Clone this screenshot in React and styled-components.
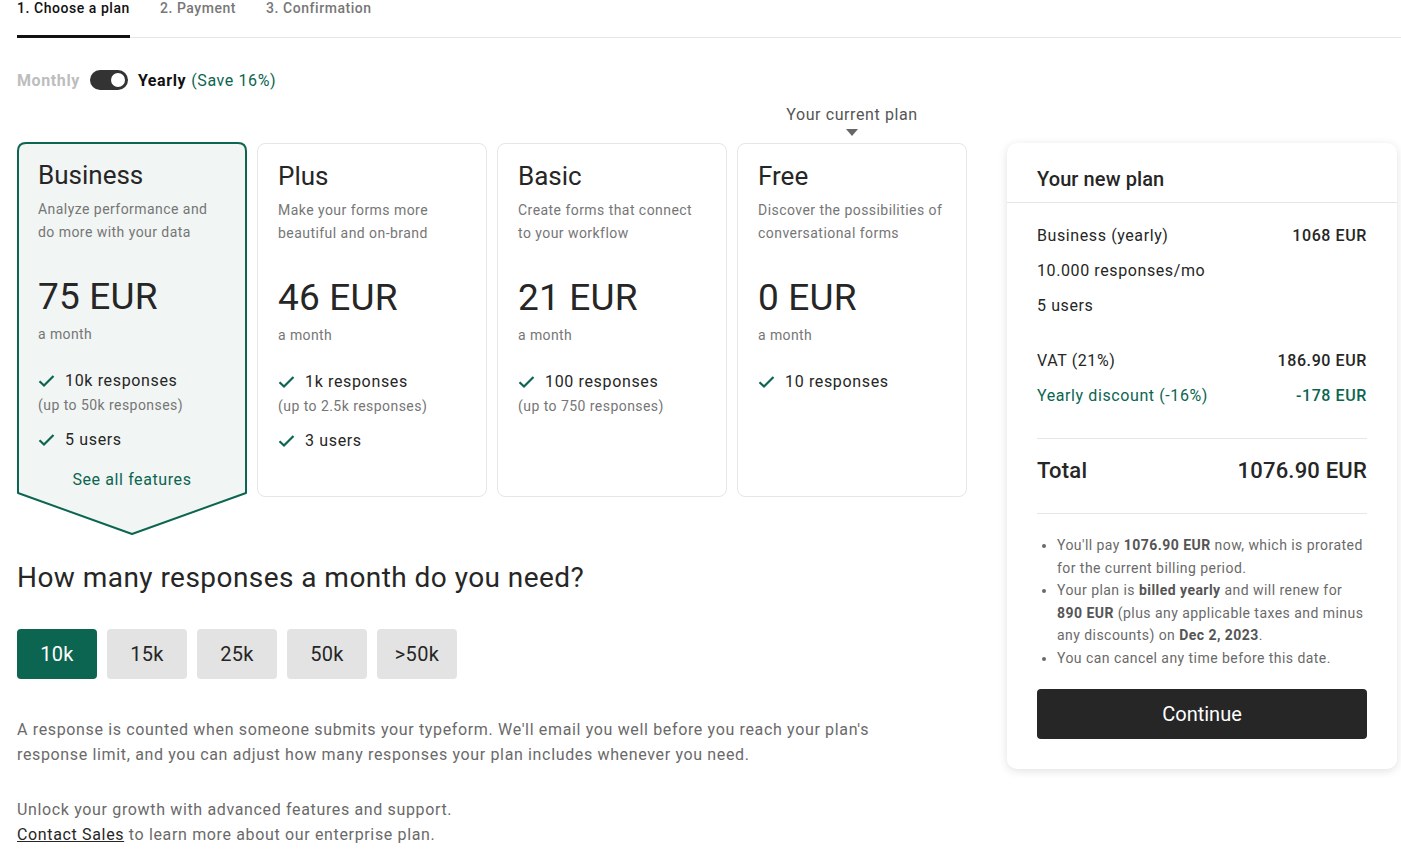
import styled, { createGlobalStyle } from "styled-components";

const GREEN = "#0b6550";

const GlobalStyle = createGlobalStyle`
  body {
    margin: 0;
    background: #fff;
    font-family: Roboto, "Liberation Sans", sans-serif;
    color: #262626;
  }
  * { box-sizing: border-box; }
`;

const plans = [
  {
    name: "Business",
    desc: ["Analyze performance and", "do more with your data"],
    price: "75 EUR",
    features: [
      { text: "10k responses", sub: "(up to 50k responses)" },
      { text: "5 users" },
    ],
    selected: true,
  },
  {
    name: "Plus",
    desc: ["Make your forms more", "beautiful and on-brand"],
    price: "46 EUR",
    features: [
      { text: "1k responses", sub: "(up to 2.5k responses)" },
      { text: "3 users" },
    ],
  },
  {
    name: "Basic",
    desc: ["Create forms that connect", "to your workflow"],
    price: "21 EUR",
    features: [{ text: "100 responses", sub: "(up to 750 responses)" }],
  },
  {
    name: "Free",
    desc: ["Discover the possibilities of", "conversational forms"],
    price: "0 EUR",
    features: [{ text: "10 responses" }],
    current: true,
  },
];

const amounts = ["10k", "15k", "25k", "50k", ">50k"];

const Check = () => (
  <svg width="17" height="14" viewBox="0 0 17 14">
    <path d="M1.5 7.2 L6 11.5 L15.5 2" fill="none" stroke={GREEN} strokeWidth="2.2" />
  </svg>
);

const SelectedShape = () => (
  <ShapeSvg viewBox="0 0 230 393" preserveAspectRatio="none">
    <path
      d="M9 1 H221 Q229 1 229 9 V351 L115 392 L1 351 V9 Q1 1 9 1 Z"
      fill="#f1f5f4"
      stroke={GREEN}
      strokeWidth="2"
      strokeLinejoin="round"
    />
  </ShapeSvg>
);

const PlanCard = ({ plan }) => (
  <Card $selected={plan.selected}>
    {plan.selected && <SelectedShape />}
    {plan.current && (
      <CurrentLabel>
        Your current plan
        <Triangle />
      </CurrentLabel>
    )}
    <CardBody>
      <PlanName>{plan.name}</PlanName>
      <PlanDesc>
        {plan.desc[0]}
        <br />
        {plan.desc[1]}
      </PlanDesc>
      <Price>{plan.price}</Price>
      <Per>a month</Per>
      <Features>
        {plan.features.map((f) => (
          <Feature key={f.text}>
            <FeatureLine>
              <Check />
              {f.text}
            </FeatureLine>
            {f.sub && <FeatureSub>{f.sub}</FeatureSub>}
          </Feature>
        ))}
      </Features>
      {plan.selected && <SeeAll>See all features</SeeAll>}
    </CardBody>
  </Card>
);

const App = () => {
  return (
    <Page>
      <GlobalStyle />
      <Tabs>
        <Tab $active>1. Choose a plan</Tab>
        <Tab>2. Payment</Tab>
        <Tab>3. Confirmation</Tab>
      </Tabs>
      <ToggleRow>
        <Monthly>Monthly</Monthly>
        <Switch>
          <Knob />
        </Switch>
        <Yearly>Yearly</Yearly>
        <Save>(Save 16%)</Save>
      </ToggleRow>
      <Main>
        <LeftColumn>
          <Cards>
            {plans.map((p) => (
              <PlanCard key={p.name} plan={p} />
            ))}
          </Cards>
          <Question>How many responses a month do you need?</Question>
          <Amounts>
            {amounts.map((a, i) => (
              <Amount key={a} $active={i === 0}>
                {a}
              </Amount>
            ))}
          </Amounts>
          <Note>
            A response is counted when someone submits your typeform. We'll email you well before
            you reach your plan's response limit, and you can adjust how many responses your plan
            includes whenever you need.
          </Note>
          <Note $gap={30}>
            Unlock your growth with advanced features and support.
            <br />
            <SalesLink href="#">Contact Sales</SalesLink> to learn more about our enterprise plan.
          </Note>
        </LeftColumn>
        <Summary>
          <SummaryHeader>Your new plan</SummaryHeader>
          <SummaryBody>
            <Line>
              <span>Business (yearly)</span>
              <Value>1068 EUR</Value>
            </Line>
            <Line>
              <span>10.000 responses/mo</span>
            </Line>
            <Line>
              <span>5 users</span>
            </Line>
            <Line $top={20}>
              <span>VAT (21%)</span>
              <Value>186.90 EUR</Value>
            </Line>
            <Line $green>
              <span>Yearly discount (-16%)</span>
              <Value>-178 EUR</Value>
            </Line>
            <Divider $top={25} />
            <TotalLine>
              <span>Total</span>
              <span>1076.90 EUR</span>
            </TotalLine>
            <Divider $top={27} />
            <Bullets>
              <li>
                You'll pay <b>1076.90 EUR</b> now, which is prorated for the current billing
                period.
              </li>
              <li>
                Your plan is <b>billed yearly</b> and will renew for <b>890 EUR</b> (plus any
                applicable taxes and minus any discounts) on <b>Dec 2, 2023</b>.
              </li>
              <li>You can cancel any time before this date.</li>
            </Bullets>
            <ContinueButton>Continue</ContinueButton>
          </SummaryBody>
        </Summary>
      </Main>
    </Page>
  );
};

export default App;

const Page = styled.div`
  padding: 0 4px 0 17px;
  height: 858px;
  overflow: hidden;
`;

const Tabs = styled.nav`
  display: flex;
  gap: 30px;
  border-bottom: 1px solid #e6e6e6;
  margin-right: -4px;
`;

const Tab = styled.div`
  font-size: 14px;
  font-weight: 500;
  line-height: 16px;
  letter-spacing: 0.55px;
  padding-bottom: 19px;
  color: ${(p) => (p.$active ? "#111" : "#777")};
  border-bottom: 3px solid ${(p) => (p.$active ? "#111" : "transparent")};
  margin-bottom: -1px;
`;

const ToggleRow = styled.div`
  display: flex;
  align-items: center;
  margin-top: 32px;
  height: 20px;
  font-size: 16px;
  letter-spacing: 0.6px;
`;

const Monthly = styled.span`
  color: #bdbdbd;
  font-weight: 700;
`;

const Switch = styled.div`
  width: 38px;
  height: 20px;
  border-radius: 10px;
  background: #333;
  margin: 0 10px;
  display: flex;
  align-items: center;
  justify-content: flex-end;
  padding-right: 3px;
`;

const Knob = styled.div`
  width: 14px;
  height: 14px;
  border-radius: 50%;
  background: #fff;
`;

const Yearly = styled.span`
  font-weight: 700;
  color: #111;
`;

const Save = styled.span`
  color: ${GREEN};
  margin-left: 5px;
`;

const Main = styled.div`
  display: flex;
  gap: 40px;
  margin-top: 53px;
  align-items: flex-start;
`;

const LeftColumn = styled.div`
  width: 950px;
  flex-shrink: 0;
`;

const Cards = styled.div`
  display: flex;
  gap: 10px;
  align-items: flex-start;
`;

const Card = styled.div`
  position: relative;
  width: 230px;
  height: 354px;
  border-radius: 8px;
  border: 1px solid ${(p) => (p.$selected ? "transparent" : "#e6e6e6")};
  margin-top: ${(p) => (p.$selected ? "-1px" : "0")};
`;

const ShapeSvg = styled.svg`
  position: absolute;
  left: -1px;
  top: -1px;
  width: 230px;
  height: 393px;
  overflow: visible;
`;

const CurrentLabel = styled.div`
  position: absolute;
  bottom: 100%;
  left: 0;
  right: 0;
  margin-bottom: 8px;
  display: flex;
  flex-direction: column;
  align-items: center;
  font-size: 16px;
  color: #555;
  line-height: 22px;
  letter-spacing: 0.6px;
`;

const Triangle = styled.div`
  margin-top: 3px;
  width: 0;
  height: 0;
  border-left: 6px solid transparent;
  border-right: 6px solid transparent;
  border-top: 7px solid #666;
`;

const CardBody = styled.div`
  position: relative;
  padding: 16px 20px 0;
`;

const PlanName = styled.div`
  font-size: 26px;
  line-height: 32px;
  color: #262626;
  letter-spacing: 0;
`;

const PlanDesc = styled.div`
  margin-top: 7px;
  font-size: 14px;
  line-height: 23px;
  color: #767676;
  letter-spacing: 0.45px;
`;

const Price = styled.div`
  margin-top: 31px;
  font-size: 37px;
  line-height: 44px;
  color: #262626;
  letter-spacing: 0.2px;
`;

const Per = styled.div`
  margin-top: 5px;
  font-size: 14px;
  line-height: 20px;
  color: #767676;
  letter-spacing: 0.4px;
`;

const Features = styled.div`
  margin-top: 25px;
  display: flex;
  flex-direction: column;
  gap: 13px;
`;

const Feature = styled.div``;

const FeatureLine = styled.div`
  display: flex;
  align-items: center;
  gap: 10px;
  font-size: 16px;
  line-height: 24px;
  color: #262626;
  letter-spacing: 0.65px;
`;

const FeatureSub = styled.div`
  margin-top: 2px;
  font-size: 14px;
  line-height: 20px;
  color: #767676;
  letter-spacing: 0.45px;
`;

const SeeAll = styled.div`
  margin-top: 16px;
  text-align: center;
  font-size: 16px;
  line-height: 24px;
  color: ${GREEN};
  letter-spacing: 0.6px;
`;

const Question = styled.h2`
  margin: 63px 0 0;
  font-size: 28px;
  line-height: 36px;
  font-weight: 400;
  color: #262626;
  letter-spacing: 0.45px;
`;

const Amounts = styled.div`
  display: flex;
  gap: 10px;
  margin-top: 33px;
`;

const Amount = styled.button`
  width: 80px;
  height: 50px;
  border: none;
  border-radius: 4px;
  font-family: Roboto, "Liberation Sans", sans-serif;
  font-size: 20px;
  letter-spacing: 0.3px;
  color: ${(p) => (p.$active ? "#fff" : "#262626")};
  background: ${(p) => (p.$active ? GREEN : "#e3e3e3")};
`;

const Note = styled.p`
  margin: ${(p) => p.$gap || 38}px 0 0;
  max-width: 880px;
  font-size: 16px;
  line-height: 25px;
  color: #6a6a6a;
  letter-spacing: 0.65px;
`;

const SalesLink = styled.a`
  color: #262626;
  text-decoration: underline;
`;

const Summary = styled.aside`
  width: 390px;
  background: #fff;
  border-radius: 10px;
  box-shadow: 0 2px 10px rgba(0, 0, 0, 0.12);
`;

const SummaryHeader = styled.div`
  padding: 24px 30px 11px;
  font-size: 20px;
  line-height: 24px;
  font-weight: 500;
  letter-spacing: 0.1px;
  border-bottom: 1px solid #e6e6e6;
`;

const SummaryBody = styled.div`
  padding: 15px 30px 30px;
`;

const Line = styled.div`
  display: flex;
  justify-content: space-between;
  font-size: 16px;
  line-height: 35px;
  letter-spacing: 0.6px;
  margin-top: ${(p) => p.$top || 0}px;
  color: ${(p) => (p.$green ? GREEN : "#262626")};
`;

const Value = styled.span`
  font-weight: 500;
`;

const Divider = styled.hr`
  margin: ${(p) => p.$top}px 0 0;
  border: none;
  border-top: 1px solid #e6e6e6;
`;

const TotalLine = styled.div`
  display: flex;
  justify-content: space-between;
  margin-top: 17px;
  font-size: 22px;
  line-height: 30px;
  font-weight: 500;
  letter-spacing: 0.2px;
`;

const Bullets = styled.ul`
  margin: 20px 0 0;
  padding-left: 20px;
  font-size: 14px;
  line-height: 22.5px;
  letter-spacing: 0.45px;
  color: #6a6a6a;

  b {
    font-weight: 700;
    color: #555;
  }
`;

const ContinueButton = styled.button`
  margin-top: 20px;
  width: 100%;
  height: 50px;
  border: none;
  border-radius: 4px;
  background: #262626;
  color: #fff;
  font-family: Roboto, "Liberation Sans", sans-serif;
  font-size: 20px;
`;
